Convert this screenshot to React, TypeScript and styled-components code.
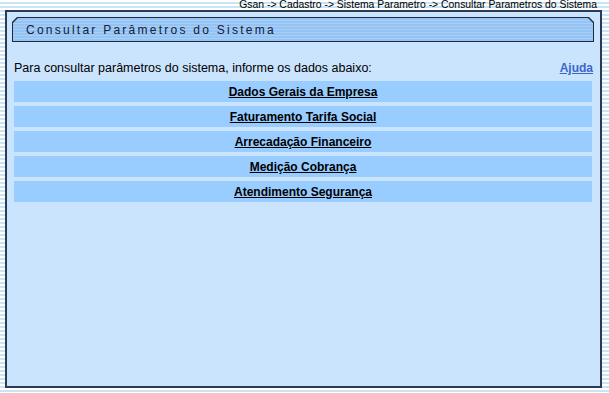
import React from "react";
import styled, { createGlobalStyle } from "styled-components";

const GlobalStyle = createGlobalStyle`
  html, body {
    margin: 0;
    padding: 0;
  }
  body {
    width: 609px;
    height: 393px;
    overflow: hidden;
    font-family: "Liberation Sans", Arial, sans-serif;
    background: repeating-linear-gradient(
      to bottom,
      #ffffff 0px,
      #ffffff 2px,
      #c9e4f5 2px,
      #c9e4f5 4px
    );
  }
`;

const Page = styled.div`
  display: flex;
  flex-direction: column;
  width: 609px;
  height: 393px;
`;

const Breadcrumb = styled.div`
  height: 10px;
  padding-right: 12px;
  text-align: right;
  font-size: 10.4px;
  line-height: 10px;
  color: #000;
  white-space: nowrap;
`;

const Panel = styled.div`
  box-sizing: border-box;
  margin-left: 5px;
  width: 597px;
  height: 378px;
  border: 2px solid #2c3a52;
  background: #cbe4fd;
  padding: 5px 6px 0 5px;
  display: flex;
  flex-direction: column;
`;

const chamfer =
  "polygon(5px 0, calc(100% - 5px) 0, 100% 5px, 100% 100%, 0 100%, 0 5px)";

const TabOuter = styled.div`
  height: 25px;
  background: #1d2a40;
  clip-path: ${chamfer};
  padding: 1px;
  box-sizing: border-box;
`;

const TabInner = styled.div`
  height: 100%;
  clip-path: ${chamfer};
  background: repeating-linear-gradient(
    to bottom,
    #95c3f3 0px,
    #95c3f3 2px,
    #a8cff7 2px,
    #a8cff7 3px
  );
  display: flex;
  align-items: center;
  padding-left: 13px;
  font-size: 12px;
  letter-spacing: 2.25px;
  color: #10203a;
`;

const IntroRow = styled.div`
  display: flex;
  justify-content: space-between;
  align-items: center;
  margin-top: 19px;
  padding: 0 1px 0 2px;
  font-size: 12.5px;
  line-height: 14px;
  color: #000;
`;

const HelpLink = styled.a`
  font-weight: bold;
  font-size: 12px;
  color: #3a67c9;
  text-decoration: underline;
`;

const Menu = styled.div`
  display: flex;
  flex-direction: column;
  gap: 4px;
  margin-top: 6px;
  padding: 0 2px;
`;

const MenuItem = styled.div`
  height: 21px;
  background: #99ccff;
  display: flex;
  align-items: center;
  justify-content: center;
  font-size: 12px;
  font-weight: bold;
  color: #000;
  text-decoration: underline;
`;

const items = [
  "Dados Gerais da Empresa",
  "Faturamento Tarifa Social",
  "Arrecadação Financeiro",
  "Medição Cobrança",
  "Atendimento Segurança",
];

export default function App() {
  return (
    <Page>
      <GlobalStyle />
      <Breadcrumb>
        Gsan -&gt; Cadastro -&gt; Sistema Parametro -&gt; Consultar Parametros do Sistema
      </Breadcrumb>
      <Panel>
        <TabOuter>
          <TabInner>Consultar Parâmetros do Sistema</TabInner>
        </TabOuter>
        <IntroRow>
          <span>Para consultar parâmetros do sistema, informe os dados abaixo:</span>
          <HelpLink>Ajuda</HelpLink>
        </IntroRow>
        <Menu>
          {items.map((label) => (
            <MenuItem key={label}>{label}</MenuItem>
          ))}
        </Menu>
      </Panel>
    </Page>
  );
}
